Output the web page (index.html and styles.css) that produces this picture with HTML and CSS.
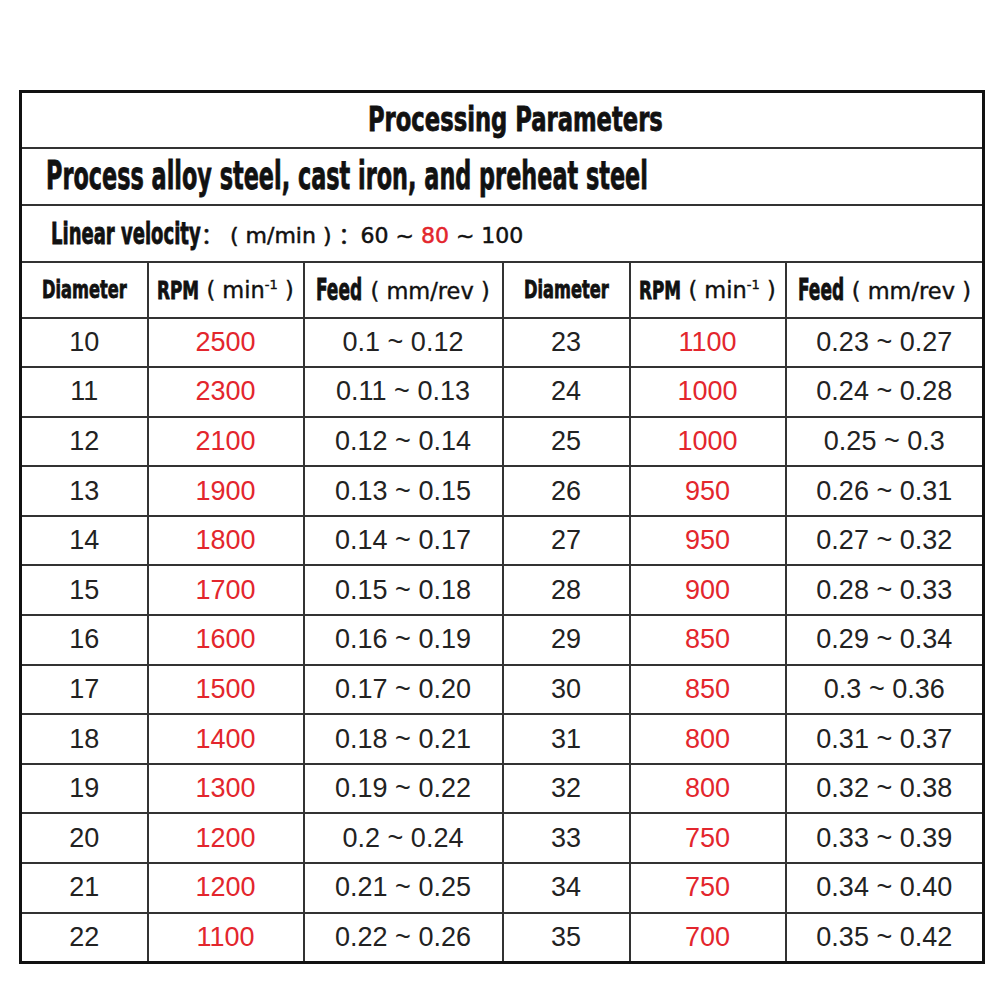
FILE: index.html
```html
<!DOCTYPE html>
<html>
<head>
<meta charset="utf-8">
<link rel="stylesheet" href="styles.css">
</head>
<body>
<div class="wrap">
<table class="params">
  <colgroup>
    <col class="c-d"><col class="c-r"><col class="c-f"><col class="c-d"><col class="c-r"><col class="c-f2">
  </colgroup>
  <tr class="r-title">
    <td colspan="6" class="title"><span class="cz w-title"><span class="t-title">Processing Parameters</span></span></td>
  </tr>
  <tr class="r-sub">
    <td colspan="6" class="sub"><span class="cz w-sub"><span class="t-sub">Process alloy steel, cast iron, and preheat steel</span></span></td>
  </tr>
  <tr class="r-vel">
    <td colspan="6" class="vel"><span class="cz w-vel"><span class="t-vel">Linear velocity</span></span><span class="plain vp">： ( m/min ) ：60 ~ <span class="red">80</span> ~ 100</span></td>
  </tr>
  <tr class="r-head">
    <th><span class="cz w-diam"><span class="t-diam">Diameter</span></span></th>
    <th><span class="cz w-rpm"><span class="t-rpm">RPM</span></span><span class="plain hp"> ( min<sup>-1</sup> )</span></th>
    <th><span class="cz w-feed"><span class="t-feed">Feed</span></span><span class="plain hp"> ( mm/rev )</span></th>
    <th><span class="cz w-diam"><span class="t-diam">Diameter</span></span></th>
    <th><span class="cz w-rpm"><span class="t-rpm">RPM</span></span><span class="plain hp"> ( min<sup>-1</sup> )</span></th>
    <th><span class="cz w-feed"><span class="t-feed">Feed</span></span><span class="plain hp"> ( mm/rev )</span></th>
  </tr>
  <tr><td>10</td><td class="red">2500</td><td>0.1 ~ 0.12</td><td>23</td><td class="red">1100</td><td>0.23 ~ 0.27</td></tr>
  <tr><td>11</td><td class="red">2300</td><td>0.11 ~ 0.13</td><td>24</td><td class="red">1000</td><td>0.24 ~ 0.28</td></tr>
  <tr><td>12</td><td class="red">2100</td><td>0.12 ~ 0.14</td><td>25</td><td class="red">1000</td><td>0.25 ~ 0.3</td></tr>
  <tr><td>13</td><td class="red">1900</td><td>0.13 ~ 0.15</td><td>26</td><td class="red">950</td><td>0.26 ~ 0.31</td></tr>
  <tr><td>14</td><td class="red">1800</td><td>0.14 ~ 0.17</td><td>27</td><td class="red">950</td><td>0.27 ~ 0.32</td></tr>
  <tr><td>15</td><td class="red">1700</td><td>0.15 ~ 0.18</td><td>28</td><td class="red">900</td><td>0.28 ~ 0.33</td></tr>
  <tr><td>16</td><td class="red">1600</td><td>0.16 ~ 0.19</td><td>29</td><td class="red">850</td><td>0.29 ~ 0.34</td></tr>
  <tr><td>17</td><td class="red">1500</td><td>0.17 ~ 0.20</td><td>30</td><td class="red">850</td><td>0.3 ~ 0.36</td></tr>
  <tr><td>18</td><td class="red">1400</td><td>0.18 ~ 0.21</td><td>31</td><td class="red">800</td><td>0.31 ~ 0.37</td></tr>
  <tr><td>19</td><td class="red">1300</td><td>0.19 ~ 0.22</td><td>32</td><td class="red">800</td><td>0.32 ~ 0.38</td></tr>
  <tr><td>20</td><td class="red">1200</td><td>0.2 ~ 0.24</td><td>33</td><td class="red">750</td><td>0.33 ~ 0.39</td></tr>
  <tr><td>21</td><td class="red">1200</td><td>0.21 ~ 0.25</td><td>34</td><td class="red">750</td><td>0.34 ~ 0.40</td></tr>
  <tr><td>22</td><td class="red">1100</td><td>0.22 ~ 0.26</td><td>35</td><td class="red">700</td><td>0.35 ~ 0.42</td></tr>
</table>
</div>
</body>
</html>
```
FILE: styles.css
```css
html, body {
  margin: 0;
  padding: 0;
  background: #fff;
}
.wrap {
  padding: 90px 0 0 19px;
}
.params {
  border-collapse: collapse;
  table-layout: fixed;
  width: 964px;
  border: 3px solid #111;
  font-family: "Liberation Sans", Arial, sans-serif;
  color: #222;
}
.c-d { width: 127px; }
.c-r { width: 156px; }
.c-f { width: 199px; }
.c-f2 { width: 198px; }
.params td, .params th {
  border: 2px solid #333;
  padding: 0;
  text-align: center;
  vertical-align: middle;
  white-space: nowrap;
}
.params td {
  font-size: 27px;
  height: 47.6px;
}
.red { color: #e3262d; }
.cz {
  display: inline-block;
  white-space: nowrap;
  text-align: left;
  font-family: "DejaVu Sans Condensed", "DejaVu Sans", sans-serif;
  font-weight: bold;
  color: #111;
  -webkit-text-stroke: 0.7px #111;
}
.cz > span {
  display: inline-block;
  transform-origin: 0 50%;
}
.params td.title, .params td.sub, .params td.vel {
  height: auto;
}
.r-title { height: 56px; }
.r-sub { height: 57px; }
.r-vel { height: 57px; }
.r-head { height: 56px; }
.params td.title {
  padding-left: 31px;
  text-align: center;
}
.w-title { width: 300px; }
.t-title { font-size: 30px; transform: scale(0.84, 1.1); }
.params td.sub {
  text-align: left;
  padding-left: 24px;
}
.w-sub { width: 605px; }
.t-sub { font-size: 35px; transform: scale(0.71, 1.1); }
.params td.vel {
  text-align: left;
  padding-left: 29px;
}
.w-vel { width: 150px; }
.t-vel { font-size: 26px; transform: scale(0.77, 1.15); }
.plain {
  font-family: "DejaVu Sans", "Noto Sans CJK SC", sans-serif;
  font-size: 21px;
  font-weight: normal;
  color: #111;
  -webkit-text-stroke: 0.4px #111;
}
.plain.vp {
  font-size: 22px;
  -webkit-text-stroke: 0.5px #111;
}
.plain.hp {
  font-size: 22.5px;
}
.plain .red {
  color: #e3262d;
  -webkit-text-stroke: 0.5px #e3262d;
}
.plain sup {
  font-size: 13px;
  vertical-align: 9px;
  line-height: 0;
}
.w-diam { width: 85px; }
.t-diam { font-size: 22px; transform: scale(0.82, 1.15); }
.w-rpm { width: 42px; }
.t-rpm { font-size: 22px; transform: scale(0.85, 1.15); }
.w-feed { width: 47px; }
.t-feed { font-size: 27px; transform: scale(0.7, 1.1); }
```
